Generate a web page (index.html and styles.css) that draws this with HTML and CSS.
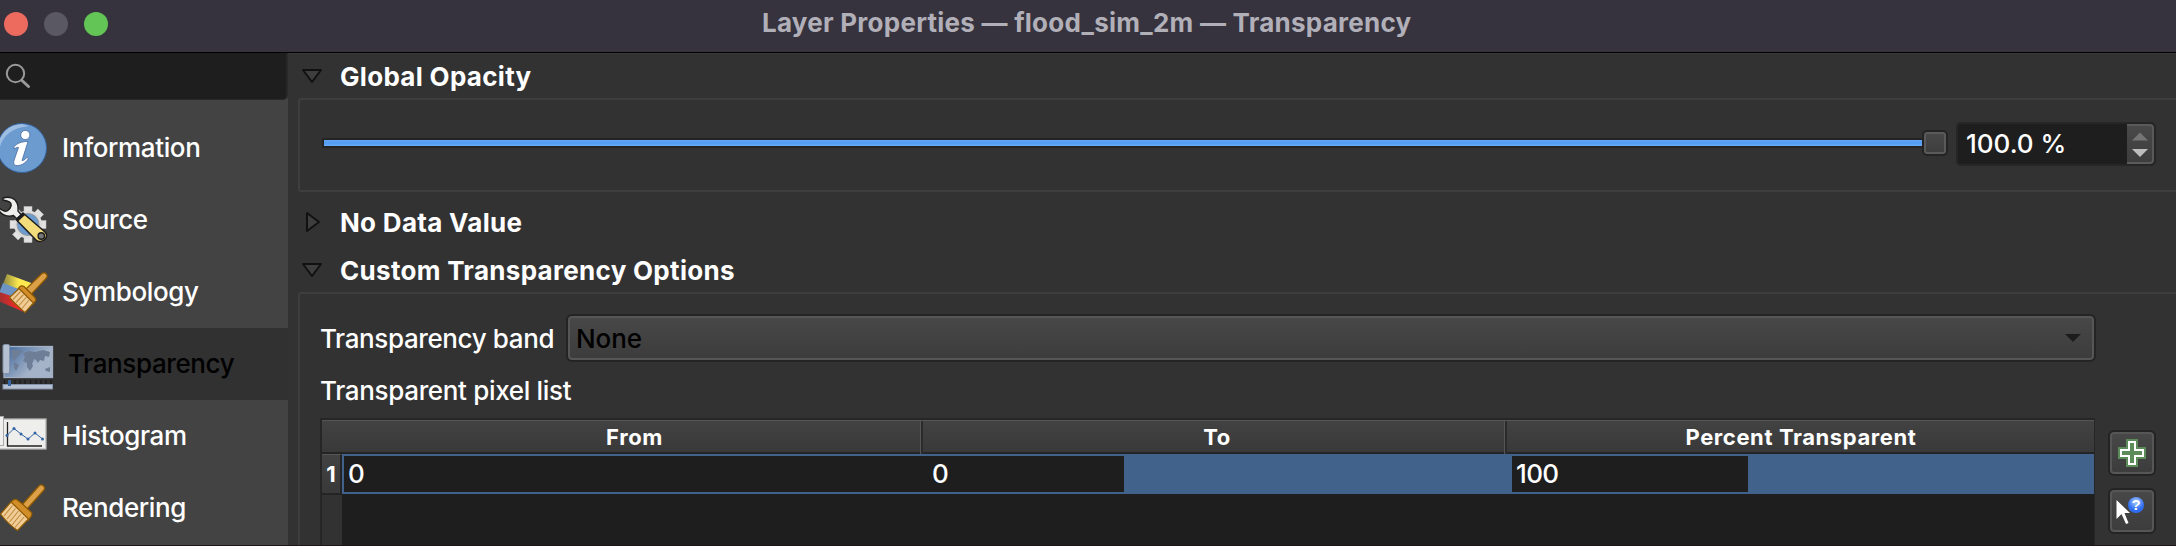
FILE: index.html
```html
<!DOCTYPE html>
<html lang="en">
<head>
<meta charset="utf-8">
<title>Layer Properties — flood_sim_2m — Transparency</title>
<link rel="stylesheet" href="styles.css">
</head>
<body>
<div class="window">
  <header class="titlebar">
    <div class="lights"><i class="light close"></i><i class="light minimize"></i><i class="light zoom"></i></div>
    <h1 class="title">Layer Properties — flood_sim_2m — Transparency</h1>
  </header>
  <div class="content">
    <aside class="sidebar">
      <div class="search">
        <svg width="40" height="47" viewBox="0 53 40 47"><circle cx="15.5" cy="73.5" r="8.7" fill="none" stroke="#9a9a9a" stroke-width="2"/><path d="M22 80.500L28.500 86.500" stroke="#9a9a9a" stroke-width="3" stroke-linecap="round"/></svg>
      </div>
      <nav class="nav">
        <a class="item info">
          <svg class="ico" viewBox="0 112 56 72">
            <defs><clipPath id="disc"><circle cx="22" cy="148" r="24"/></clipPath></defs>
            <circle cx="22" cy="148" r="24.500" fill="#6c9bd0" stroke="#3465a4" stroke-width="1"/>
            <path clip-path="url(#disc)" d="M-1 153C0 138 10 128 29 126L22 124C6 124-3 135-3 148Z" fill="#9dbde2"/>
            <circle cx="25.300" cy="135" r="4.600" fill="#fff" stroke="#3c5f96" stroke-width=".7"/>
            <path d="M14 147C17 143 22 141.500 28 141.500L22 160.500C23 161 25 159.500 27 157.500L28.500 158.500C25 164 20 166 16 165.500C13 165 13.500 162 14.500 159L18.500 147.500C17 147 16 148 14 149Z" fill="#fff" stroke="#3c5f96" stroke-width=".7"/>
          </svg><span>Information</span></a>
        <a class="item source">
          <svg class="ico" viewBox="0 184 56 72">
            <g transform="translate(28 224.500)">
              <g fill="#e2e2e2" stroke="#bcbcbc" stroke-width=".5">
                <rect x="-4" y="-18" width="8" height="36"/><rect x="-18" y="-4" width="36" height="8"/>
                <rect x="-4" y="-18" width="8" height="36" transform="rotate(45)"/><rect x="-18" y="-4" width="36" height="8" transform="rotate(45)"/>
              </g>
              <circle r="14" fill="#dcdcdc"/><circle r="11" fill="#6c9bd0" stroke="#999"/>
            </g>
            <path d="M3 198C9 196 15 198 17 203C18.500 206 18 209 18 211L21.500 215L17 219L13.500 215.500C8 217 3 215 0 212L-2 207L2 210C6 213 10 210 11 206C12 202 8 201 3 200Z" fill="#eeeeec" stroke="#1c1c1c" stroke-width="1.400"/>
            <path d="M23 213L45 232C47.500 234.500 47 238 44 240C41 242 38 242 36 240L16 219.500Z" fill="#f3dc7b" stroke="#1c1c1c" stroke-width="1.500"/>
            <path d="M15.500 219L23 213L25 215L18 221.500Z" fill="#1c1c1c"/>
            <circle cx="41.300" cy="236" r="3.200" fill="#777" stroke="#1c1c1c" stroke-width="1.400"/>
          </svg><span>Source</span></a>
        <a class="item symbology">
          <svg class="ico" viewBox="0 256 56 72">
            <defs>
              <linearGradient id="gy"><stop offset="0" stop-color="#8d8640"/><stop offset=".5" stop-color="#fce94f"/></linearGradient>
              <linearGradient id="gr"><stop offset="0" stop-color="#a03030"/><stop offset=".6" stop-color="#ef2929"/></linearGradient>
            </defs>
            <path d="M7 274L34 284L24 292L3 284Z" fill="url(#gy)"/>
            <path d="M3 283L24 291L16 300L-1 293Z" fill="#6c94c4"/>
            <path d="M-1 292L30 302L24 312L-2 301Z" fill="url(#gr)"/>
            <path d="M26 289L41.500 274C43 272.500 45 272.500 46.300 274C47.500 275.500 47.500 277 46 278.500L31.500 294Z" fill="#dba048" stroke="#8f5902" stroke-width="1.200"/>
            <path d="M19.500 287C21 285.500 22.500 285.500 24 286.500L34.500 297C36 298.500 36.300 300 35 301.500L33 304L18 289Z" fill="#d18e28" stroke="#8f5902" stroke-width="1.200"/>
            <path d="M19 288.500L33.500 303L25 312.500C20 308 14 303 9.500 297.500Z" fill="#f0cd96" stroke="#8f5902" stroke-width="1.200"/>
            <path d="M20.500 291.500L13 299.500M23.500 294.500L16 302.500M26.500 297L19 305.500M29 300L22 308.500" stroke="#c08a40" stroke-width="1.100"/>
          </svg><span>Symbology</span></a>
        <a class="item selected transparency">
          <svg class="ico" viewBox="0 328 56 72">
            <defs><linearGradient id="gm" x2="1" y2=".6"><stop offset="0" stop-color="#3c659c"/><stop offset=".75" stop-color="#a4b3c8"/></linearGradient></defs>
            <rect x="4" y="346.500" width="48.500" height="31" fill="url(#gm)" stroke="#a3b0c4" stroke-width="1.300"/>
            <path d="M23 353L29 351L35 352L43 350L50 352L49 357L45 356L44 361L40 360L38 363L36 360L34 359L32 364L33 366L30 371L27 367L27 363L23 361L25 357ZM11 350L19 350L24 351L20 354L17 357L14 361L12 357ZM14 362L19 365L16 371L14 368ZM45 369L50 367L50 372L46 371Z" fill="#6d7e96"/>
            <rect x="3" y="344.500" width="6.500" height="29" rx="1.500" fill="#b5c0d0" stroke="#8393aa"/>
            <path d="M4.500 380V384M15 380V384M20 380V384M25 380V384M30.500 380V384M36 380V384M41 380V384M46 380V384M51 380V384" stroke="#1c1c1c" stroke-width="1.200"/>
            <rect x="3" y="384.500" width="49.500" height="4.500" fill="#b5c0d0" stroke="#8393aa"/>
            <rect x="8" y="380" width="3" height="6" fill="#3465a4"/>
          </svg><span>Transparency</span></a>
        <a class="item histogram">
          <svg class="ico" viewBox="0 400 56 72">
            <rect x="-3" y="419" width="49" height="30" fill="#eeeeec" stroke="#b5b5b5" stroke-width="1.300"/>
            <rect x="-4" y="416.500" width="7.500" height="29" fill="#f0f0f0" stroke="#aaa"/>
            <path d="M7.500 422V446H42" fill="none" stroke="#222" stroke-width="1.300"/>
            <path d="M7 435.500L14 428.500L21 434L28 439L35 433L42.500 439" fill="none" stroke="#3465a4" stroke-width="1"/>
            <g fill="#3465a4"><circle cx="7" cy="435.500" r="1.500"/><circle cx="14" cy="428.500" r="1.500"/><circle cx="21" cy="434" r="1.500"/><circle cx="28" cy="439" r="1.500"/><circle cx="35" cy="433" r="1.500"/><circle cx="42.500" cy="439" r="1.500"/></g>
          </svg><span>Histogram</span></a>
        <a class="item rendering">
          <svg class="ico" viewBox="0 472 56 72">
            <path d="M21 506L38.500 486.500C40 484.500 42 484.500 43.500 486C45 487.500 44.500 489.500 43.500 490.500L27 509Z" fill="#dba048" stroke="#8f5902" stroke-width="1.200"/>
            <path d="M12 501C14 499 16 499 18 500.500L23 504.500L31 512C32.500 513.500 32 515 31 516.500L28 520.500L10.500 503Z" fill="#d18e28" stroke="#8f5902" stroke-width="1.200"/>
            <path d="M11 502L28.500 519L17.500 530.500C11 526 5 520 .500 514Z" fill="#f0cd96" stroke="#8f5902" stroke-width="1.200"/>
            <path d="M12.500 505.500L4 516M15.500 508.500L7 519M18.500 511L9.500 522M21 514L12 525M24 517L15 527.500" stroke="#c08a40" stroke-width="1.100"/>
          </svg><span>Rendering</span></a>
      </nav>
    </aside>
    <main class="panel">
      <section class="group">
        <h2 class="heading h-opacity"><svg class="tri" viewBox="0 0 22 22"><path d="M2 5H20L11 17Z"/></svg><span>Global Opacity</span></h2>
        <div class="frame opacity">
          <div class="slider"><div class="groove"></div><div class="handle"></div></div>
          <div class="spin"><span>100.0 %</span>
            <div class="steps"><svg width="25" height="38" viewBox="0 0 25 38"><path d="M5 14.500L13 6.500L21 14.500Z" fill="#757575"/><path d="M5 23H21L13 31Z" fill="#bdbdbd"/></svg></div>
          </div>
        </div>
      </section>
      <h2 class="heading h-nodata"><svg class="tri" viewBox="0 0 22 22"><path d="M6 2V20L18 11Z"/></svg><span>No Data Value</span></h2>
      <section class="group custom">
        <h2 class="heading h-custom"><svg class="tri" viewBox="0 0 22 22"><path d="M2 5H20L11 17Z"/></svg><span>Custom Transparency Options</span></h2>
        <div class="frame options">
          <div class="band"><label>Transparency band</label>
            <div class="combo"><span>None</span><svg width="16" height="8" viewBox="0 0 16 8"><path d="M0 0H16L8 8Z" fill="#1c1c1c"/></svg></div>
          </div>
          <div class="list-label"><span>Transparent pixel list</span></div>
          <div class="list">
            <div class="table">
              <div class="thead">
                <div class="th"></div><div class="th from"><span>From</span></div><div class="th to"><span>To</span></div><div class="th pct"><span>Percent Transparent</span></div>
              </div>
              <div class="row">
                <div class="num"><span>1</span></div>
                <div class="cell c1">0</div><div class="cell c2">0</div><div class="cell c3">100</div>
              </div>
              <div class="empty"></div>
            </div>
            <div class="tools">
              <button class="tool"><svg width="28" height="28" viewBox="0 0 28 28"><path d="M8 0H20V8H28V20H20V28H8V20H0V8H8Z" fill="#5b8c5a"/><path d="M11 3H17V11H25V17H17V25H11V17H3V11H11Z" fill="#5b8c5a" stroke="#fff" stroke-width="2"/></svg></button>
              <button class="tool"><svg width="40" height="38" viewBox="0 0 40 38"><defs><radialGradient id="q" cy=".3"><stop offset="0" stop-color="#a9ccff"/><stop offset="1" stop-color="#2f6df0"/></radialGradient></defs><path d="M4.500 8L18 21H12.500L16.500 31L14 32L9.500 22L4.500 27Z" fill="#fff"/><circle cx="24" cy="13" r="8" fill="url(#q)"/><text x="24" y="18" class="mark">?</text></svg></button>
            </div>
          </div>
        </div>
      </section>
    </main>
  </div>
</div>
</body>
</html>
```
FILE: styles.css
```css
* { box-sizing: border-box; }
body { margin: 0; background: #323232; font-family: Inter, "Liberation Sans", sans-serif; font-size: 26px; color: #fff; }
.window { width: 2176px; height: 546px; overflow: hidden; border-bottom: 1px solid #1c1417; }
.titlebar { height: 53px; background: #36333e; border-bottom: 1px solid #000; display: grid; grid-template-columns: 762px 1fr; }
.lights { display: flex; gap: 16px; padding: 12px 0 0 4px; }
.light { width: 24px; height: 24px; border-radius: 50%; }
.close { background: #ed6a5f; }
.minimize { background: #5a5862; }
.zoom { background: #62c555; }
.title { margin: 0; font-size: 26px; font-weight: 700; letter-spacing: .25px; line-height: 46px; color: #b1afb8; white-space: nowrap; }
.content { display: flex; height: 493px; }
.sidebar { width: 288px; background: #434343; }
.search { width: 288px; height: 47px; background: #1e1e1e; border: solid #282828; border-width: 0 2px 1px 0; border-radius: 0 0 5px 0; }
.search svg, .ico, .tri { display: block; }
.nav { padding-top: 12px; }
.item { display: flex; height: 72px; line-height: 72px; letter-spacing: -.38px; font-weight: 450; white-space: nowrap; }
.ico { width: 56px; height: 72px; margin-right: 6px; flex: none; }
.selected { background: #313131; color: #000; }
.selected .ico { margin-right: 12px; }
.panel { width: 1888px; background: #323232; padding: 0 0 0 10px; border-top: 1px solid #393939; }
.heading { margin: 0; display: flex; align-items: center; height: 44px; font-size: 26px; font-weight: 700; letter-spacing: .3px; line-height: 44px; white-space: nowrap; }
.heading span { padding-top: 2px; }
.tri { width: 22px; height: 22px; margin: 0 17px 0 3px; }
.tri path { fill: #3e3e3e; stroke: #111; stroke-width: 2; stroke-linejoin: round; }
.frame { border: 2px solid #3e3e3e; border-right: 0; border-radius: 3px 0 0 3px; width: 1878px; }
.opacity { display: flex; height: 94px; padding: 22px 0 0 22px; }
.slider { width: 1626px; height: 26px; margin-top: 8px; display: flex; align-items: center; }
.groove { width: 1600px; height: 10px; background: linear-gradient(#65a5f5, #519cf2 50%, #69acfa); border: 2px solid #242424; border-right: 0; }
.handle { width: 26px; height: 26px; border-radius: 5px; border: 2px solid #242424; background: linear-gradient(#494949, #3d3d3d); box-shadow: inset 0 0 0 2px #5a5a5a; }
.spin { margin-left: 8px; width: 200px; height: 44px; border: 2px solid #262626; border-radius: 5px; background: #1e1e1e; display: flex; justify-content: space-between; line-height: 40px; padding-left: 8px; font-weight: 450; }
.steps { width: 27px; background: linear-gradient(#494949, #3d3d3d); border: 2px solid #5a5a5a; border-left: 0; border-radius: 0 4px 4px 0; }
.steps svg { display: block; }
.h-nodata { height: 52px; margin-top: 4px; }
.options { height: 270px; padding: 20px 0 0 20px; }
.band { display: flex; line-height: 50px; height: 48px; letter-spacing: -.38px; font-weight: 450; }
.band label { width: 246px; white-space: nowrap; }
.combo { width: 1530px; border: 2px solid #242424; border-radius: 6px; background: linear-gradient(#484848, #3c3c3c); box-shadow: inset 0 0 0 2px #565656; display: flex; justify-content: space-between; align-items: center; line-height: 44px; letter-spacing: -.1px; color: #000; padding: 0 13px 0 8px; }
.combo span { padding-top: 2px; }
.list-label { height: 56px; line-height: 58px; letter-spacing: -.33px; font-weight: 450; }
.list { display: flex; }
.table { width: 1775px; border: solid #262626; border-width: 2px 1px 0 2px; }
.thead { display: grid; grid-template-columns: 20px 579px 584px 589px; height: 34px; background: linear-gradient(#424242, #393939); border-top: 1px solid #555; border-bottom: 2px solid #242424; font-size: 22px; font-weight: 700; letter-spacing: .6px; line-height: 33px; text-align: center; }
.from { padding-left: 6px; }
.to { padding-left: 6px; }
.pct { padding-left: 1px; }
.to, .pct { border-left: 2px solid #2b2b2b; box-shadow: -1px 0 #555; }
.row { display: grid; grid-template-columns: 20px 584px 584px 584px; height: 40px; background: #41638b; }
.num { background: linear-gradient(#424242, #393939); border-right: 2px solid #242424; border-bottom: 2px solid #242424; border-top: 1px solid #555; font-size: 22px; font-weight: 700; line-height: 38px; text-align: center; }
.cell { height: 36px; margin-top: 2px; background: #1e1e1e; line-height: 36px; padding-left: 4px; font-weight: 450; }
.c1 { margin-left: 2px; }
.c2 { width: 198px; padding-left: 6px; }
.c3 { margin-left: 2px; width: 236px; letter-spacing: -.6px; }
.empty { height: 60px; background: #1e1e1e; margin-left: 20px; box-shadow: -20px 0 #323232; }
.tools { padding: 12px 0 0 13px; display: flex; flex-direction: column; gap: 12px; }
.tool { width: 48px; height: 46px; padding: 0; border: 2px solid #242424; border-radius: 6px; background: linear-gradient(#484848, #3c3c3c); box-shadow: inset 0 0 0 2px #565656; display: flex; justify-content: center; align-items: center; }
.mark { font-size: 15px; font-weight: 700; fill: #fff; text-anchor: middle; }
```
